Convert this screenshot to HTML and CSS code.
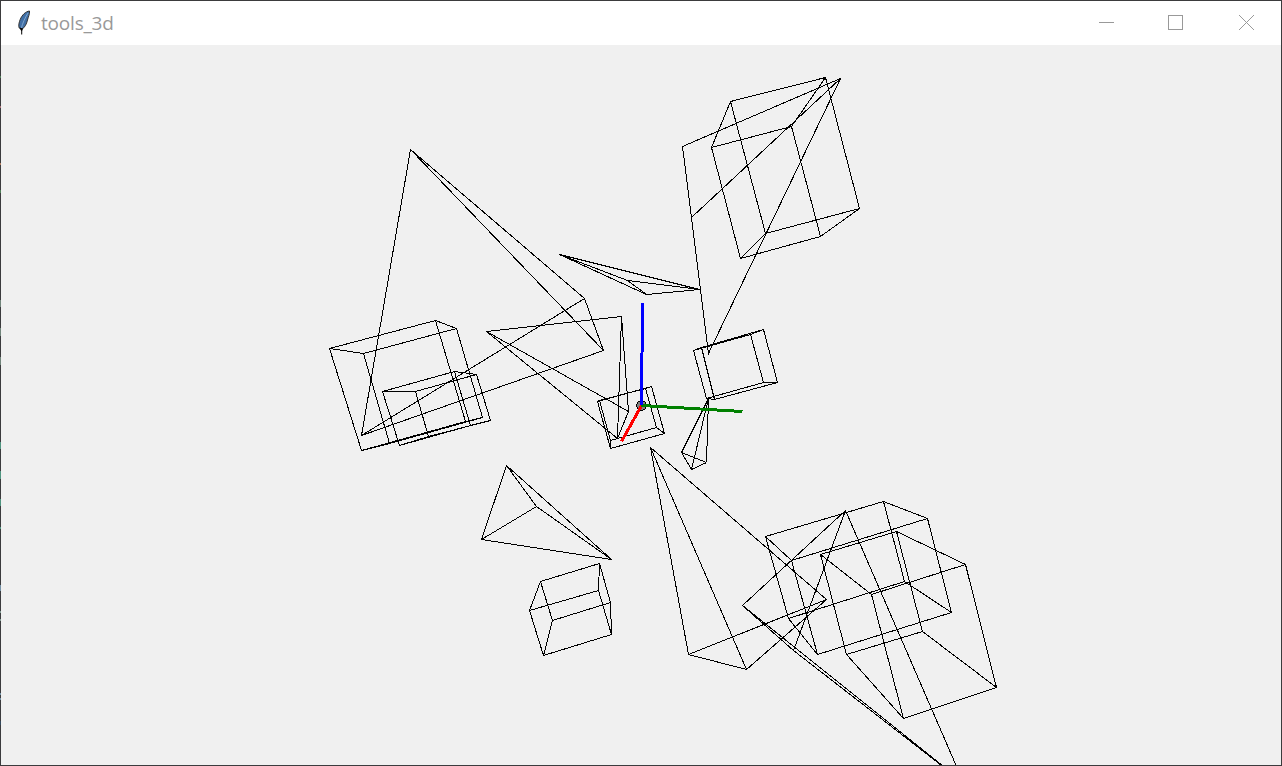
FILE: index.html
```html
<!DOCTYPE html>
<html lang="en">
<head>
<meta charset="utf-8">
<title>tools_3d</title>
<link rel="stylesheet" href="styles.css">
</head>
<body>
<div class="window">
  <header class="titlebar">
    <svg class="feather" width="14" height="25" viewBox="0 0 14 25">
      <path d="M12.500 1C8.500 1.500 5 5 3.200 9.500C2 12.500 1.300 15.500 2.200 18L4.500 19.500C8 17.500 9.500 14 10.500 10C11.200 7 12.800 4 12.500 1Z" fill="#3f6ea5" stroke="#333" stroke-width="1"/>
      <path d="M11 3C8 8 5.500 13 4.200 19" fill="none" stroke="#8fb4d8" stroke-width="0.8"/>
      <path d="M2.500 17.500L4.200 21V24.500H5.200V21L6 18.500Z" fill="#000"/>
    </svg>
    <span class="title">tools_3d</span>
    <div class="controls">
      <svg class="minimize" width="15" height="15" viewBox="0 0 15 15"><path d="M0 7.500H15"/></svg>
      <svg width="15" height="15" viewBox="0 0 15 15"><path d="M.5 .5H14.500V14.500H.5Z"/></svg>
      <svg class="close" width="15" height="15" viewBox="0 0 15 15"><path d="M0 0L15 15M15 0L0 15"/></svg>
    </div>
  </header>
  <svg class="scene" width="1280" height="720" viewBox="1 45 1280 720">
    <g transform="translate(.5 .5)">
      <!-- cubes -->
      <path d="M730 101L825 77L859 208L765 233ZM711 147L791 126L820 236L740 258ZM730 101L711 147M825 77L791 126M859 208L820 236M765 233L740 258"/>
      <path d="M329 348L435 320L465 421L361 450ZM363 353L456 328L482 417L389 443ZM329 348L363 353M435 320L456 328M465 421L482 417M361 450L389 443"/>
      <path d="M382 391L454 371L470 425L399 445ZM415 391L476 374L490 420L428 436ZM382 391L415 391M454 371L476 374M470 425L490 420M399 445L428 436"/>
      <path d="M597 401L651 386L664 433L610 448ZM599 400L645 388L656 427L610 440ZM597 401L599 400M651 386L645 388M664 433L656 427M610 448L610 440"/>
      <path d="M693 350L750 334L763 382L706 398ZM701 347L763 329L777 382L714 399ZM693 350L701 347M750 334L763 329M763 382L777 382M706 398L714 399"/>
      <path d="M540 581L599 563L610 602L552 620ZM529 610L598 590L611 634L543 655ZM540 581L529 610M599 563L598 590M610 602L611 634M552 620L543 655"/>
      <path d="M765 536L883 501L904 581L788 618ZM791 560L927 518L951 612L817 654ZM765 536L791 560M883 501L927 518M904 581L951 612M788 618L817 654"/>
      <path d="M820 554L896 531L922 631L846 654ZM871 594L965 564L996 687L903 718ZM820 554L871 594M896 531L965 564M922 631L996 687M846 654L903 718"/>
      <!-- pyramids -->
      <path d="M840 78L682 146L691 217L708 353ZM840 78L691 217"/>
      <path d="M410 149L361 435L584 298L603 350ZM410 149L584 298M361 435L603 350"/>
      <path d="M559 254L699 289L646 294L627 280ZM559 254L646 294M627 280L699 289"/>
      <path d="M486 331L621 316L628 411L617 438ZM486 331L628 411M621 316L617 438"/>
      <path d="M708 398L681 452L691 469L706 462ZM708 398L691 469M681 452L706 462"/>
      <path d="M506 465L481 539L536 506L611 559ZM506 465L536 506M481 539L611 559"/>
      <path d="M650 447L688 654L746 669L826 599ZM650 447L746 669M688 654L826 599"/>
      <path d="M845 510L742 605L793 650ZM845 510L963 782M742 605L963 782M793 650L963 782"/>
      <!-- origin and axes -->
      <circle class="origin" cx="641" cy="405" r="4.800"/>
      <path class="axis x" d="M641 405L621 441"/>
      <path class="axis y" d="M641 405L742 411"/>
      <path class="axis z" d="M641 405L642 303"/>
    </g>
  </svg>
  <!-- specks along the left window edge -->
  <svg class="edge" width="1" height="766" viewBox="0 0 1 766">
    <path stroke="#4f7f58" d="M.5 76v2M.5 190v3"/>
    <path stroke="#a87078" d="M.5 106v2"/>
    <path stroke="#b07c60" d="M.5 163v2"/>
    <path stroke="#71857b" d="M.5 300v7M.5 328v8M.5 357v8"/>
    <path stroke="#4f9580" d="M.5 442v7M.5 471v8M.5 499v7M.5 527v2"/>
    <path stroke="#7390a5" d="M.5 585v6M.5 693v2M.5 698v2"/>
    <path stroke="#839b94" d="M.5 611v2M.5 619v2"/>
    <path stroke="#34485c" d="M.5 721v4"/>
  </svg>
</div>
</body>
</html>
```
FILE: styles.css
```css
body {
  margin: 0;
  overflow: hidden;
}
.window {
  position: relative;
  box-sizing: border-box;
  width: 1282px;
  height: 766px;
  border: 1px solid #3b3b3d;
  background: #f0f0f0;
  display: flex;
  flex-direction: column;
}
.titlebar {
  height: 44px;
  flex: none;
  box-sizing: border-box;
  padding: 0 27px 1px 16px;
  display: flex;
  align-items: center;
  background: #fff;
}
.feather {
  margin-right: 10px;
}
.title {
  font: 19px/42px "Open Sans", "Noto Sans", sans-serif;
  letter-spacing: -0.2px;
  color: #999;
}
.controls {
  display: flex;
  gap: 55px;
  margin-left: auto;
}
.controls svg {
  fill: none;
  stroke: #999;
  stroke-width: 1;
  shape-rendering: crispEdges;
}
.controls .minimize {
  margin-right: -1px;
}
.controls .close {
  margin-left: 1px;
  shape-rendering: auto;
}
.scene {
  display: block;
  flex: none;
  fill: none;
  stroke: #000;
  stroke-width: 1;
  shape-rendering: crispEdges;
}
.scene .origin {
  fill: #808080;
}
.axis {
  stroke-width: 3;
}
.axis.x { stroke: #f00; }
.axis.y { stroke: #008000; }
.axis.z { stroke: #00f; }
.edge {
  position: absolute;
  left: -1px;
  top: -1px;
}
```
